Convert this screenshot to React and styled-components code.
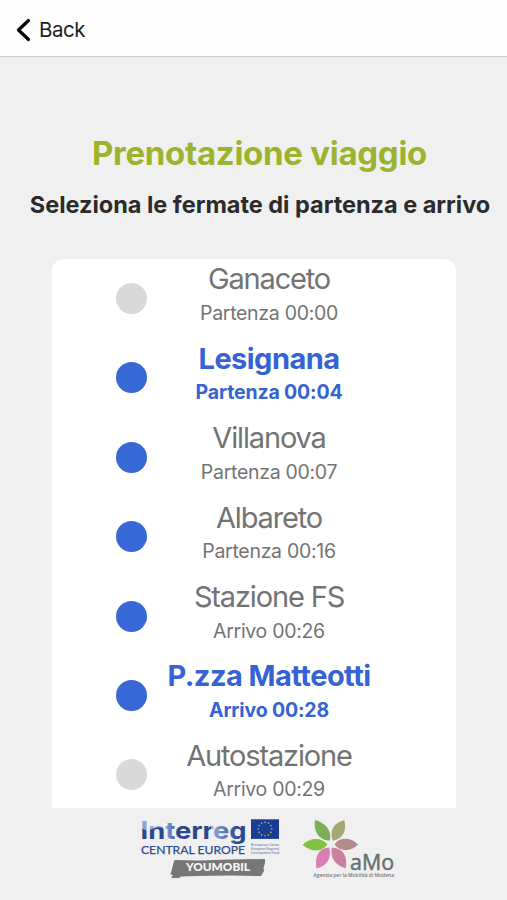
import React from "react";
import styled, { createGlobalStyle } from "styled-components";

const Global = createGlobalStyle`
  * { box-sizing: border-box; }
  body { margin: 0; background: #f0f0f0; font-family: Inter, "Liberation Sans", sans-serif; }
`;
const Screen = styled.div`
  width: 507px; height: 900px; overflow: hidden;
  display: flex; flex-direction: column; background: #f0f0f0;
`;
const Header = styled.header`
  height: 57px; flex: none; display: flex; align-items: center;
  padding: 3px 0 0 16px; gap: 8px; background: #fdfdfd; border-bottom: 1px solid #cbcbcb;
`;
const BackLabel = styled.span`
  font-size: 20.5px; line-height: 26px; letter-spacing: -0.5px; color: #1d1d1d;
`;
const Title = styled.h1`
  margin: 76px 0 0; padding-left: 12px; text-align: center; white-space: nowrap;
  font-size: 33px; line-height: 40px; font-weight: 700; letter-spacing: -0.28px; color: #9cb42d;
`;
const Subtitle = styled.h2`
  margin: 17px 0 0; padding-left: 13px; text-align: center; white-space: nowrap;
  font-size: 23.5px; line-height: 30px; font-weight: 700; letter-spacing: -0.02px; color: #2b2b2b;
`;
const Stops = styled.ul`
  list-style: none; margin: 39px 0 0 52px; padding: 0; width: 404px; height: 549px; flex: none;
  overflow: hidden; background: #fff; border-radius: 12px 12px 0 0;
`;
const Stop = styled.li`
  height: 79.4px; display: flex;
  color: ${p => (p.$selected ? "#3563d3" : "#737373")};
  font-weight: ${p => (p.$selected ? 700 : 400)};
`;
const Dot = styled.span`
  flex: none; width: 31px; height: 31px; margin: 24px 0 0 64px; border-radius: 50%;
  background: ${p => (p.$active ? "#3867d6" : "#d9d9d9")};
`;
const StopText = styled.div`
  width: 244px; flex: none; display: flex; flex-direction: column; align-items: center; white-space: nowrap;
`;
const Name = styled.span`
  margin-top: 2.4px; font-size: 29px; line-height: 36px;
  letter-spacing: ${p => (p.$selected ? "-0.55px" : "-1.15px")};
`;
const Time = styled.span`
  margin-top: 5.6px; font-size: 19.5px; line-height: 20px;
  letter-spacing: ${p => (p.$selected ? "-0.15px" : "-0.3px")};
`;
const Footer = styled.footer`
  display: flex; align-items: flex-start; padding: 8px 0 0 138px; gap: 18px;
`;
const Logo = styled.svg`
  display: block; flex: none; overflow: visible;
`;

const stops = [
  ["Ganaceto", "Partenza 00:00", false, false],
  ["Lesignana", "Partenza 00:04", true, true],
  ["Villanova", "Partenza 00:07", true, false],
  ["Albareto", "Partenza 00:16", true, false],
  ["Stazione FS", "Arrivo 00:26", true, false],
  ["P.zza Matteotti", "Arrivo 00:28", true, true],
  ["Autostazione", "Arrivo 00:29", false, false],
];
const stars = Array.from({ length: 12 }, (_, i) => [
  127 + 6.8 * Math.cos((i * Math.PI) / 6), 13 + 6.8 * Math.sin((i * Math.PI) / 6),
]);

function InterregLogo() {
  return (
    <Logo width="146" height="66" viewBox="0 0 146 66">
      <defs>
        <linearGradient id="fade" x1="0" x2="1">
          <stop offset="0" stopColor="#9aace0" />
          <stop offset="1" stopColor="#2a478f" />
        </linearGradient>
        <pattern id="interreg" patternUnits="userSpaceOnUse" width="146" height="34">
          <rect width="146" height="34" fill="#2a478f" />
          <path d="M0 0H10V15L0 11Z" fill="#8da1da" />
          <path d="M10 0H30V14C22 9 16 12 10 15Z" fill="#9aace0" />
          <rect x="27" y="0" width="12" height="24" fill="url(#fade)" />
          <rect x="73" y="0" width="27" height="34" fill="url(#fade)" />
        </pattern>
      </defs>
      <text x="2.5" y="22.5" textLength="106" lengthAdjust="spacingAndGlyphs" fontFamily="Inter" fontWeight="700" fontSize="24" fill="url(#interreg)">Interreg</text>
      <rect x="113" y="3.3" width="28" height="19.6" fill="#1a3c93" />
      {stars.map(([x, y]) => <circle key={`${x}-${y}`} cx={x} cy={y} r=".8" fill="#b9c278" />)}
      <text x="3" y="37.8" textLength="104" lengthAdjust="spacingAndGlyphs" fontFamily="Lato" fontSize="11.5" fill="#304b91" stroke="#304b91" strokeWidth=".25">CENTRAL EUROPE</text>
      <g fontFamily="Liberation Sans" fontSize="3.4" fill="#5d6f9e">
        <text x="113" y="29.6" textLength="28" lengthAdjust="spacingAndGlyphs">European Union</text>
        <text x="113" y="33.6" textLength="28" lengthAdjust="spacingAndGlyphs">European Regional</text>
        <text x="113" y="37.6" textLength="28" lengthAdjust="spacingAndGlyphs">Development Fund</text>
      </g>
      <path d="M36 44.5 38 44 60 44.4 92 43.4 127 43 127 47 125.500 52 126 55 123 60 92 59.5 60 60 43 60.500 41 62 33 62 35 59 32.500 58.500 34 53Z" fill="#777" />
      <text x="48" y="54.8" textLength="64" lengthAdjust="spacingAndGlyphs" fontFamily="Lato" fontWeight="900" fontSize="11.5" fill="#f7f7f7">YOUMOBIL</text>
    </Logo>
  );
}

function AmoLogo() {
  return (
    <Logo width="96" height="66" viewBox="0 0 96 66">
      <path d="M28 24.500C18 25 11 16 13 4 24 7 30 15 28 24.500Z" fill="#7dae5a" />
      <path d="M30.700 24.700C27 14 32 7 42.300 4 45 15 41 23 30.700 24.700Z" fill="#a5a872" />
      <path d="M25.500 28.500C19 37 9 36 .5 29 8 21.500 19 21 25.500 28.500Z" fill="#80c342" />
      <path d="M32.500 28.500C38 20.500 49 21.500 56 28.500 49 36 38 36 32.500 28.500Z" fill="#b58a8b" />
      <path d="M27.300 31.500C30 42 25 50 14.500 52.500 12.500 41 16 32 27.300 31.500Z" fill="#d87fb4" />
      <path d="M29.700 31.500C41 32 46 40 43.700 52.500 33 49 28 42 29.700 31.500Z" fill="#cc80a0" />
      <text x="48" y="53.500" textLength="44" lengthAdjust="spacingAndGlyphs" fontFamily="Open Sans" fontSize="22" fill="#65706f" stroke="#65706f" strokeWidth=".5">aMo</text>
      <text x="11.500" y="61.300" textLength="80.500" lengthAdjust="spacingAndGlyphs" fontFamily="Open Sans" fontSize="5" fontWeight="600" fill="#777">Agenzia per la Mobilità di Modena</text>
    </Logo>
  );
}

export default function App() {
  return (
    <>
      <Global />
      <Screen>
        <Header>
          <svg width="15" height="24" viewBox="0 0 15 24" fill="none" stroke="#050505" strokeWidth="3.2" strokeLinecap="round" strokeLinejoin="round">
            <path d="M12.500 2.500 2.500 12l10 9.500" />
          </svg>
          <BackLabel>Back</BackLabel>
        </Header>
        <Title>Prenotazione viaggio</Title>
        <Subtitle>Seleziona le fermate di partenza e arrivo</Subtitle>
        <Stops>
          {stops.map(([name, time, active, selected]) => (
            <Stop key={name} $selected={selected}>
              <Dot $active={active} />
              <StopText>
                <Name $selected={selected}>{name}</Name>
                <Time $selected={selected}>{time}</Time>
              </StopText>
            </Stop>
          ))}
        </Stops>
        <Footer>
          <InterregLogo />
          <AmoLogo />
        </Footer>
      </Screen>
    </>
  );
}
